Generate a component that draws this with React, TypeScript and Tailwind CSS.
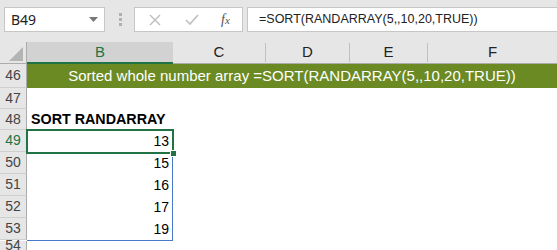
import React from "react";

const cols = [
  { name: "B", w: "w-[146px]" },
  { name: "C", w: "w-[93px]" },
  { name: "D", w: "w-[84px]" },
  { name: "E", w: "w-[78px]" },
  { name: "F", w: "flex-1" },
];

const rows = [
  { n: 50, v: "15", h: "h-[22px]" },
  { n: 51, v: "16", h: "h-[22px]" },
  { n: 52, v: "17", h: "h-[22px]" },
  { n: 53, v: "19", h: "h-[22px]" },
];

const cellFont = { fontFamily: '"Liberation Sans", Arial, sans-serif' };
const uiFont = { fontFamily: '"Noto Sans", "Liberation Sans", sans-serif' };

function RowHead({ n, green }: { n: number; green?: boolean }) {
  return (
    <div
      className={
        "w-[27px] shrink-0 h-full flex items-center justify-center bg-[#e6e6e6] border-r border-r-[#ababab] border-b border-b-[#cfcfcf] text-[14px] " +
        (green ? "text-[#217346]" : "text-[#444]")
      }
    >
      {n}
    </div>
  );
}

export default function App() {
  return (
    <div className="w-[557px] h-[250px] overflow-hidden bg-white" style={cellFont}>
      {/* formula bar */}
      <div className="h-[42px] bg-[#e6e6e6] flex items-start pt-[7px]" style={uiFont}>
        <div className="ml-[4px] w-[101px] h-[25px] bg-white border border-[#c6c6c6] flex items-center justify-between pl-[6px] pr-[6px] text-[14px] text-[#222]">
          <span>B49</span>
          <svg width="9" height="5" viewBox="0 0 9 5">
            <path d="M0 0h9L4.5 5z" fill="#777" />
          </svg>
        </div>
        <div className="ml-[14px] mt-[6px] flex flex-col gap-[2px]">
          <div className="w-[3px] h-[3px] bg-[#b0b0b0]" />
          <div className="w-[3px] h-[3px] bg-[#b0b0b0]" />
          <div className="w-[3px] h-[3px] bg-[#b0b0b0]" />
        </div>
        <div className="ml-[12px] w-[109px] h-[25px] bg-white border border-[#c6c6c6] flex items-center">
          <svg className="ml-[14px]" width="12" height="12" viewBox="0 0 12 12">
            <path d="M1 1l10 10M11 1L1 11" stroke="#bdbdbd" strokeWidth="1.4" />
          </svg>
          <svg className="ml-[24px]" width="14" height="11" viewBox="0 0 14 11">
            <path d="M1 6l4 4 8-9" stroke="#bdbdbd" strokeWidth="1.6" fill="none" />
          </svg>
          <span
            className="ml-[22px] text-[14px] italic text-[#555]"
            style={{ fontFamily: '"Liberation Serif", serif' }}
          >
            f<span className="text-[11px]">x</span>
          </span>
        </div>
        <div className="ml-[4px] flex-1 h-[25px] bg-white border border-r-0 border-[#c6c6c6] flex items-center pl-[11px] text-[12.5px] text-[#222]" style={cellFont}>
          =SORT(RANDARRAY(5,,10,20,TRUE))
        </div>
      </div>

      {/* column headers */}
      <div className="h-[22px] flex bg-[#e6e6e6] text-[15px] text-[#222]">
        <div className="w-[27px] shrink-0 relative border-r border-r-[#ababab] border-b border-b-[#ababab]">
          <svg className="absolute right-[3px] bottom-[2px]" width="14" height="14" viewBox="0 0 14 14">
            <path d="M14 0V14H0z" fill="#b4b4b4" />
          </svg>
        </div>
        {cols.map((c) =>
          c.name === "B" ? (
            <div key={c.name} className={c.w + " shrink-0 bg-[#d2d2d2] border-b-2 border-b-[#217346] flex items-center justify-center text-[#217346]"}>
              {c.name}
            </div>
          ) : (
            <div key={c.name} className={c.w + " shrink-0 border-b border-b-[#ababab] flex items-center justify-center"}>
              <div className="flex-1 text-center">{c.name}</div>
              {c.name !== "F" && <div className="w-px h-[19px] bg-[#c0c0c0]" />}
            </div>
          )
        )}
      </div>

      {/* row 46 */}
      <div className="h-[24px] flex">
        <RowHead n={46} />
        <div className="flex-1 bg-[#6b8a23] text-white text-[15px] flex items-center justify-center">
          Sorted whole number array =SORT(RANDARRAY(5,,10,20,TRUE))
        </div>
      </div>
      {/* row 47 */}
      <div className="h-[21px] flex">
        <RowHead n={47} />
        <div className="flex-1" />
      </div>
      {/* row 48 */}
      <div className="h-[21px] flex">
        <RowHead n={48} />
        <div className="flex-1 flex items-center pl-[4px] font-bold text-[14.3px] text-black">SORT RANDARRAY</div>
      </div>
      {/* spill rows */}
      <div className="flex">
        <div className="flex flex-col">
          <div className="h-[22px]">
            <RowHead n={49} green />
          </div>
          {rows.map((r) => (
            <div key={r.n} className={r.h}>
              <RowHead n={r.n} />
            </div>
          ))}
        </div>
        <div className="w-[146px] border-r border-b border-[#4a78c8] relative">
          <div className="h-[22px] flex items-center justify-end pr-[3px] text-[14px] text-black">13</div>
          {rows.map((r) => (
            <div key={r.n} className={r.h + " flex items-center justify-end pr-[3px] text-[14px] text-black"}>
              {r.v}
            </div>
          ))}
          <div className="absolute -left-[1px] -top-[1px] w-[148px] h-[25px] border-2 border-[#217346]" />
          <div className="absolute left-[143px] top-[20px] w-[7px] h-[7px] bg-[#217346] border border-white" />
        </div>
      </div>
      <div className="h-[10px] flex">
        <RowHead n={54} />
      </div>
    </div>
  );
}
